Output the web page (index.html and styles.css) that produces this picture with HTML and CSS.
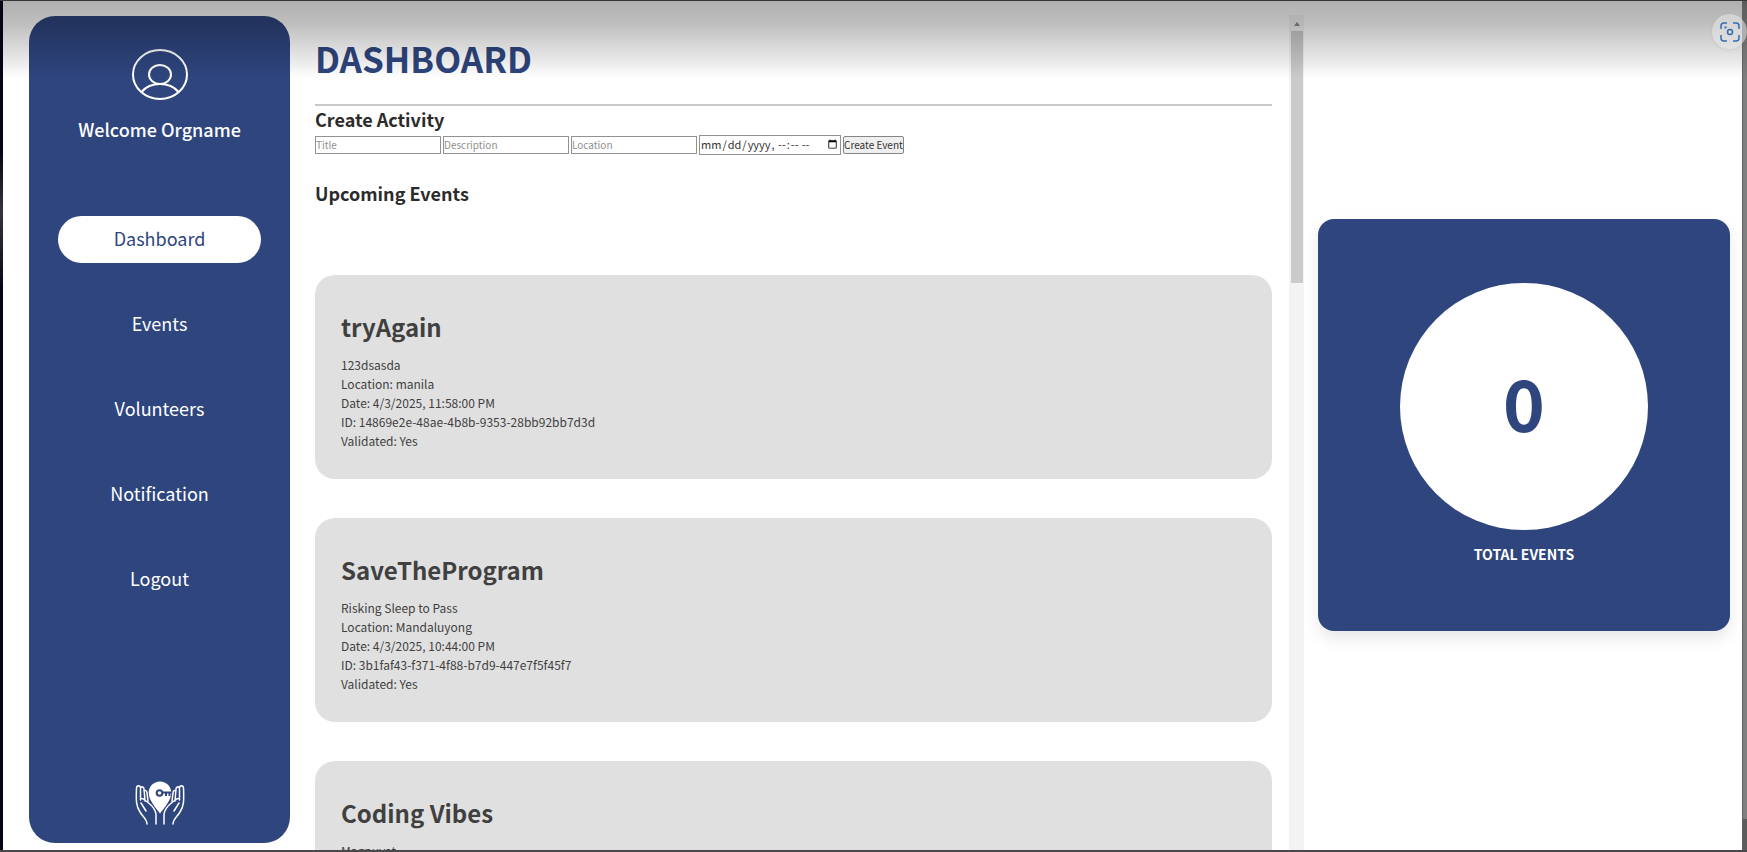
FILE: index.html
```html
<!DOCTYPE html>
<html lang="en">
<head>
<meta charset="utf-8">
<title>Dashboard</title>
<link rel="stylesheet" href="styles.css">
</head>
<body>
<div class="shade"></div>
<div class="page">
  <aside class="sidebar">
    <svg class="avatar" viewBox="0 0 56 51" fill="none" stroke="#fff" stroke-width="2">
      <ellipse cx="28" cy="25.500" rx="27" ry="24.500"/>
      <ellipse cx="28" cy="25.500" rx="11" ry="9.500"/>
      <path d="M9.500 43C14 37.500 20 35 28 35s14 2.500 18.500 8"/>
    </svg>
    <p class="welcome">Welcome Orgname</p>
    <nav class="nav">
      <a class="link active" href="#">Dashboard</a>
      <a class="link" href="#">Events</a>
      <a class="link" href="#">Volunteers</a>
      <a class="link" href="#">Notification</a>
      <a class="link" href="#">Logout</a>
    </nav>
    <svg class="logo" viewBox="0 0 50 44" fill="none" stroke="#fff" stroke-width="1.500" stroke-linecap="round" stroke-linejoin="round">
      <path fill="#fff" stroke="none" d="M25 .5c-6.500 0-11.300 5-11.300 11.300C13.700 19 20 26 25 32.500 30 26 36.300 19 36.300 11.800 36.300 5.500 31.500.5 25 .5z"/>
      <g stroke="#2e457e" stroke-width="2"><circle cx="24.500" cy="12" r="2.800"/><path stroke-linecap="butt" d="M27.500 11.500H37M31 12v3M34.500 12v3"/></g>
      <path d="M12 43c0-5-4-7-7-12C1 25 1 20 1.500 7c.2-3 4-3 4 0v12M5.500 7c1-2 3.500-1 3.500 1l1 12M9 10c1-1.500 3 0 3 2l1 8M5.500 19c0-2 2.500-2 4 0l3 2c5 4 8 7 8.500 12v10M6 22l5 8"/>
      <path d="M38 43c0-5 4-7 7-12 4-6 4-11 3.500-24-.2-3-4-3-4 0v12M44.500 7c-1-2-3.500-1-3.500 1l-1 12M41 10c-1-1.500-3 0-3 2l-1 8M44.500 19c0-2-2.500-2-4 0l-3 2c-5 4-8 7-8.500 12v10M44 22l-5 8"/>
    </svg>
  </aside>
  <div class="scroller">
    <main class="main">
      <h1 class="title">DASHBOARD</h1>
      <hr class="rule">
      <h2 class="heading">Create Activity</h2>
      <form class="form">
        <input class="field" type="text" placeholder="Title" aria-label="Title">
        <input class="field" type="text" placeholder="Description" aria-label="Description">
        <input class="field" type="text" placeholder="Location" aria-label="Location">
        <input class="field date" type="datetime-local" aria-label="Date and time">
        <button class="create" type="button">Create Event</button>
      </form>
      <h2 class="heading">Upcoming Events</h2>
      <div class="events">
        <article class="event">
          <h3 class="name">tryAgain</h3>
          <p>123dsasda</p>
          <p>Location: manila</p>
          <p>Date: 4/3/2025, 11:58:00 PM</p>
          <p>ID: 14869e2e-48ae-4b8b-9353-28bb92bb7d3d</p>
          <p>Validated: Yes</p>
        </article>
        <article class="event">
          <h3 class="name">SaveTheProgram</h3>
          <p>Risking Sleep to Pass</p>
          <p>Location: Mandaluyong</p>
          <p>Date: 4/3/2025, 10:44:00 PM</p>
          <p>ID: 3b1faf43-f371-4f88-b7d9-447e7f5f45f7</p>
          <p>Validated: Yes</p>
        </article>
        <article class="event">
          <h3 class="name">Coding Vibes</h3>
          <p>Magpuyat</p>
        </article>
      </div>
    </main>
    <div class="track"><span class="arrow"></span><div class="thumb"></div></div>
  </div>
  <section class="stats">
    <div class="stat">
      <div class="circle"><span class="count">0</span></div>
      <p class="label">TOTAL EVENTS</p>
    </div>
  </section>
</div>
<div class="edge"></div>
<button class="lens" type="button" aria-label="Visual search">
  <svg viewBox="0 0 20 20" width="20" height="20" fill="none" stroke="#2f70b3" stroke-width="1.500">
    <path d="M1 7V4q0-3 3-3h3M13 1h3q3 0 3 3v3M19 13v3q0 3-3 3h-3M7 19H4q-3 0-3-3v-3"/>
    <circle cx="10" cy="10" r="2.500"/><circle cx="5.500" cy="5.500" r=".4"/>
  </svg>
</button>
</body>
</html>
```
FILE: styles.css
```css
* { box-sizing: border-box; margin: 0; padding: 0; }
body {
  height: 100vh;
  overflow: hidden;
  display: flex;
  border-top: 1px solid #38363a;
  border-bottom: 2px solid #4a484b;
  background: #fff;
  color: #2b2b2b;
  font-family: "Noto Sans CJK SC", "Open Sans", sans-serif;
}
body::before {
  content: "";
  width: 3px;
  background: linear-gradient(#020617, #020617 150px, #33363f 210px, #020617 290px);
}
.shade {
  position: absolute;
  z-index: 2;
  inset: 1px 5px auto 3px;
  height: 77px;
  background: linear-gradient(rgba(0,0,0,.31), rgba(0,0,0,.25) 30%, rgba(0,0,0,.08) 80%, rgba(0,0,0,0));
}
.page { flex: 1; min-width: 0; display: flex; padding: 14px 12px 0 26px; }
.edge { width: 5px; background: linear-gradient(#5c5c5c, #808080 80px, #808080 calc(100% - 31px), #5c5c5c calc(100% - 31px)); border-left: 1px solid #606060; }
.sidebar {
  flex: none;
  width: 261px;
  margin: 1px 0 7px;
  padding: 33px 29px 18px;
  border-radius: 26px;
  background: #2e457e;
  color: #fff;
  display: flex;
  flex-direction: column;
  align-items: center;
}
.avatar { width: 56px; height: 51px; }
.welcome { margin-top: 15px; font-size: 18px; line-height: 28px; font-weight: 500; }
.nav { margin-top: 73px; width: 100%; display: flex; flex-direction: column; gap: 38px; }
.link { height: 47px; border-radius: 24px; color: #fff; font-size: 18px; line-height: 45px; text-align: center; text-decoration: none; }
.link.active { background: #fff; color: #2e457e; }
.logo { width: 50px; height: 44px; margin-top: auto; }
.scroller { flex: 1; min-width: 0; margin-left: 25px; display: flex; overflow: hidden; }
.main { flex: 1; min-width: 0; padding: 17px 17px 0 0; }
.title { color: #2e457e; font-size: 35px; line-height: 52px; font-weight: 700; }
.rule { margin: 20px 0 0; height: 2px; border: 0; background: #c8c8c8; }
.heading { font-size: 18px; line-height: 26px; font-weight: 700; }
.form { display: flex; align-items: center; gap: 2px; height: 20px; margin: 3px 0 25px; }
.field { width: 126px; height: 18px; padding-bottom: 1px; border: 1px solid #929292; background: #fff; font: 10px/15px "Noto Sans CJK SC", sans-serif; color: #333; }
.field::placeholder { color: #8f8f8f; }
.date { width: 142px; height: 20px; font-size: 11px; }
.create { height: 18px; border: 1px solid #858585; border-radius: 2px; background: #efefef; color: #333; font: 10px/14px "Noto Sans CJK SC", sans-serif; white-space: nowrap; }
.events { margin-top: 69px; display: flex; flex-direction: column; gap: 39px; }
.event { min-height: 204px; padding: 33px 26px 29px; border-radius: 20px; background: #e0e0e0; color: #404040; font-size: 12px; line-height: 19px; }
.name { margin-bottom: 9px; font-size: 24px; line-height: 38px; font-weight: 700; }
.track { width: 15px; background: #f3f3f3; }
.arrow { display: block; width: 0; margin: 7px auto 5px; border: 3px solid transparent; border-top: 0; border-bottom: 4px solid #8a8a8a; }
.thumb { width: 12px; height: 252px; margin: 0 auto; background: #cbcbcb; }
.stats { flex: none; width: 412px; margin-left: 14px; padding-top: 204px; }
.stat { aspect-ratio: 1; padding-top: 64px; border-radius: 16px; background: #2e457e; box-shadow: 0 8px 16px rgba(0,0,0,.09); text-align: center; }
.circle { width: 60%; aspect-ratio: 1; margin: 0 auto; border-radius: 50%; background: #fff; color: #2e457e; display: flex; align-items: center; justify-content: center; }
.count { padding-bottom: 10px; font-size: 71px; line-height: 1; font-weight: 700; }
.label { margin-top: 12px; color: #fff; font-size: 14px; line-height: 24px; font-weight: 700; }
.lens { position: absolute; z-index: 3; top: 14px; right: 0; width: 35px; height: 35px; border: 0; border-radius: 50%; background: rgba(232,232,232,.55); box-shadow: 0 1px 4px rgba(0,0,0,.05); display: grid; place-items: center; }
```
